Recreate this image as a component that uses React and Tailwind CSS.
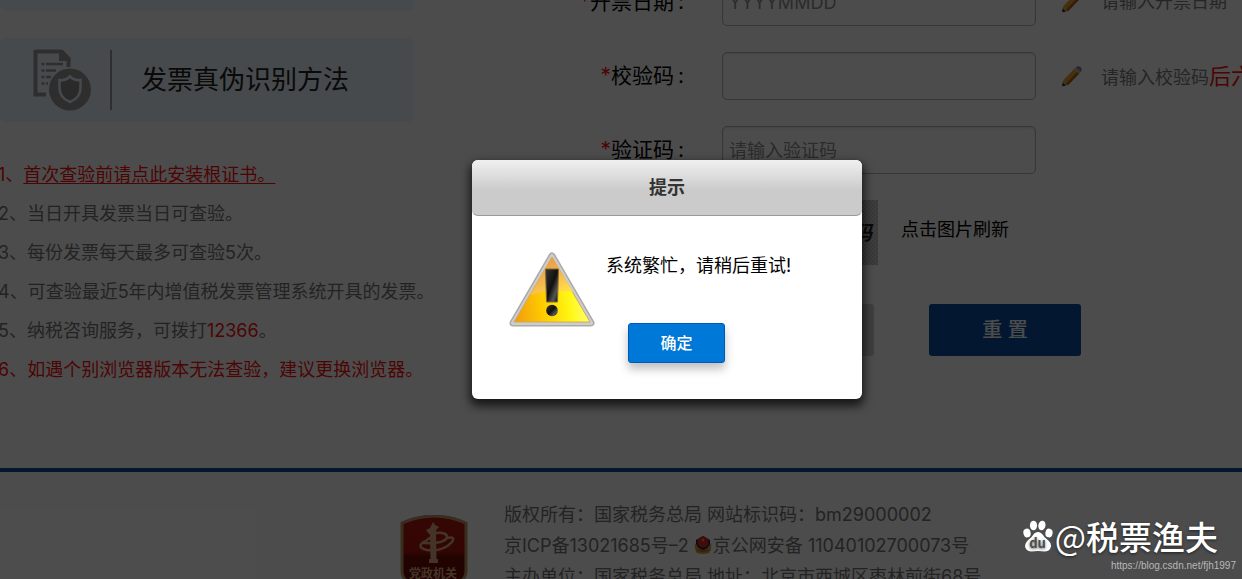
import React from "react";

function Pencil() {
  return (
    <svg viewBox="0 0 22 22" className="h-[22px] w-[22px] shrink-0" aria-hidden="true">
      <path d="M1.5 21 L2 15.5 L7 20 Z" fill="#b8a890" />
      <path d="M1.2 21.3 L1.500 17.500 L5 20.800 Z" fill="#3c3020" />
      <path d="M2 15.5 L13 4 L18 8.800 L7 20.300 Z" fill="#f0a030" />
      <path d="M5 18.500 L16.2 7 L18 8.800 L7 20.300 Z" fill="#a8691c" />
      <path d="M13 4 L14.800 2.200 L19.800 7 L18 8.800 Z" fill="#b9b9b9" />
      <path d="M14.800 2.200 Q17 0.300 19.800 2 Q21.600 4.500 19.800 7 Z" fill="#858585" />
    </svg>
  );
}

function DocumentShield() {
  return (
    <svg viewBox="0 0 60 64" className="h-16 w-[60px] shrink-0" aria-hidden="true">
      <path d="M3.500 3.500 H29 L36.500 11 V19 M3.500 2 V46.500 H14" fill="none" stroke="#999" strokeWidth="4" />
      <path d="M27 2 H31 L38.500 10 V13 H27 Z" fill="#999" />
      <path d="M9.500 16 h3 M14 16 h17 M9.500 22.500 h3 M14 22.500 h10 M9.500 29 h3 M14 29 h5 M9.500 35.500 h3 M14 35.500 h2" stroke="#999" strokeWidth="2.500" />
      <circle cx="38" cy="41.500" r="21" fill="#999" />
      <path d="M38 28.500 C35 31.500 31 32.500 27.500 32 V40 C27.500 46.500 32 51.500 38 54 C44 51.500 48.500 46.500 48.500 40 V32 C45 32.500 41 31.500 38 28.500 Z" fill="#8c8c8c" stroke="#ebf8ff" strokeWidth="2.500" />
    </svg>
  );
}

function Emblem() {
  return (
    <svg viewBox="0 0 68 84" className="h-[84px] w-[68px] shrink-0" aria-hidden="true">
      <defs>
        <linearGradient id="emblem" x1="0" y1="0" x2="0" y2="1">
          <stop offset="0" stopColor="#b41a10" />
          <stop offset="0.44" stopColor="#aa160c" />
          <stop offset="0.5" stopColor="#700c08" />
          <stop offset="1" stopColor="#700c08" />
        </linearGradient>
      </defs>
      <path d="M2 8 Q34 -6 66 8 V56 Q66 63 60 67 L34 82 L8 67 Q2 63 2 56 Z" fill="url(#emblem)" stroke="#c09868" strokeWidth="3" />
      <path d="M30 19 h6 l.5 25 h1.500 v4 h-9 v-4 h1.500 Z" fill="#e0b084" />
      <path d="M33 7 l2 3 4 2 -3 3 1 4 h-8 l-3 -4 4 -2 Z" fill="#e0b084" />
      <path d="M36 18 Q48 17 47 23 Q43 29 25 28 Q27 23 34 22 M47 23 Q56 21 52 27 Q43 37 27 35 Q15 32 25 26" fill="none" stroke="#e0b084" strokeWidth="2.500" />
      <text x="33" y="63" textAnchor="middle" fontSize="12" fontWeight="700" fill="#e0b084">党政机关</text>
    </svg>
  );
}

function PoliceBadge() {
  return (
    <svg viewBox="0 0 18 20" className="mr-px inline-block h-5 w-[18px] align-[-3px]" aria-hidden="true">
      <path d="M1 8 Q0 14 3 18 Q9 20 15 18 Q18 14 17 8 L14 12 H4 Z" fill="#d69a30" />
      <path d="M9 1 L16 5 V9 Q14 14 9 15 Q4 14 2 9 V5 Z" fill="#172a63" />
      <circle cx="9" cy="7" r="5.500" fill="#e02a20" />
      <circle cx="9" cy="5" r="1.200" fill="#f0a030" />
      <path d="M3 15 Q9 18 15 15" fill="none" stroke="#996018" strokeWidth="1" />
    </svg>
  );
}

function Warning() {
  return (
    <svg viewBox="0 0 88 78" className="h-[78px] w-[88px] shrink-0" aria-hidden="true">
      <defs>
        <linearGradient id="amber" x1="0" y1="1" x2="1" y2="0.9">
          <stop offset="0" stopColor="#f09a10" />
          <stop offset="0.4" stopColor="#ffcc00" />
          <stop offset="0.75" stopColor="#fff714" />
          <stop offset="1" stopColor="#ffff70" />
        </linearGradient>
        <linearGradient id="sheen" x1="0" y1="0" x2="0.6" y2="1">
          <stop offset="0" stopColor="#e8963c" />
          <stop offset="0.5" stopColor="#eeac50" />
          <stop offset="1" stopColor="#ffdc48" />
        </linearGradient>
        <linearGradient id="mark" x1="0" y1="0" x2="1" y2="1">
          <stop offset="0" stopColor="#333" />
          <stop offset="0.5" stopColor="#111" />
          <stop offset="0.75" stopColor="#555" />
          <stop offset="1" stopColor="#111" />
        </linearGradient>
      </defs>
      <path d="M44 5 L83 72 H5 Z" fill="#aaa" stroke="#aaa" strokeWidth="7" strokeLinejoin="round" />
      <path d="M44 5 L83 72 H5 Z" fill="#ddd" stroke="#cdcdcd" strokeWidth="4" strokeLinejoin="round" />
      <path d="M44 6 L82 71 H6 Z" fill="url(#amber)" stroke="#d0a860" strokeWidth="1" />
      <path d="M44 6 L65 41 Q42 38 22 44 Z" fill="url(#sheen)" />
      <path d="M37.500 18 H50.500 L49.500 51 H38.500 Z" fill="url(#mark)" stroke="#806830" strokeWidth="1" />
      <circle cx="44" cy="59.500" r="5.800" fill="url(#mark)" />
    </svg>
  );
}

function Paw() {
  return (
    <svg viewBox="0 0 30 32" className="h-8 w-[30px] shrink-0" aria-hidden="true">
      <g fill="#fff">
        <ellipse cx="4" cy="13" rx="3.600" ry="4.400" transform="rotate(-12 4 13)" />
        <ellipse cx="10.500" cy="5.500" rx="3.600" ry="4.800" />
        <ellipse cx="19" cy="5.500" rx="3.600" ry="4.800" transform="rotate(10 19 5)" />
        <ellipse cx="26" cy="13" rx="3.600" ry="4.400" transform="rotate(8 26 13)" />
        <path d="M15 12 C19 12 20 16 23 18.500 C27 21.500 29 24 27.500 28 C25.500 33 20 31 15 31 C10 31 5 33 2.500 28 C1 24 4 21 7.500 18 C10 16 11 12 15 12 Z" />
      </g>
      <text x="14.500" y="28" textAnchor="middle" fontSize="13" fontWeight="700" fill="#4d4d4d">du</text>
    </svg>
  );
}

function Field({ id, label, placeholder, hint }) {
  return (
    <div className="flex h-12 items-center">
      <label htmlFor={id} className="w-[138px] shrink-0 text-right text-[21px] text-black">
        <span className="text-[#ff1010]">*</span>{label}<span className="ml-1">:</span>
      </label>
      <input
        id={id}
        type="text"
        placeholder={placeholder}
        className="ml-[38px] h-12 w-[314px] shrink-0 rounded-[5px] border border-[#b4b4b4] bg-white px-1.5 text-lg text-black shadow-[inset_0_1px_2px_rgba(0,0,0,0.12)] placeholder:text-[#8f8f8f]"
      />
      {hint && (
        <div className="ml-[25px] flex shrink-0 items-center gap-[18px] whitespace-nowrap text-lg text-[#808080]">
          <Pencil />
          <span>{hint}</span>
        </div>
      )}
    </div>
  );
}

export default function App() {
  return (
    <div className="relative h-screen overflow-hidden bg-white font-['Inter','Noto_Sans_CJK_SC',sans-serif]">
      <main className="flex h-[468px]">
        <aside className="w-[414px] shrink-0">
          <div className="h-[11px] rounded-b-md bg-[#ebf8ff]" />
          <h2 className="mt-[27px] flex h-[84px] items-center rounded-md bg-[#ebf8ff] pl-8">
            <DocumentShield />
            <span className="ml-[18px] h-[60px] w-0.5 bg-[#999]" />
            <span className="ml-[29px] text-[26px] leading-[38px] text-[#222]">发票真伪识别方法</span>
          </h2>
          <ol className="-ml-0.5 mt-[33px] whitespace-nowrap text-lg leading-[39px] text-[#777]">
            <li className="text-[#ff1010]">1、<a href="#cert" className="underline underline-offset-2">首次查验前请点此安装根证书。</a></li>
            <li>2、当日开具发票当日可查验。</li>
            <li>3、每份发票每天最多可查验5次。</li>
            <li>4、可查验最近5年内增值税发票管理系统开具的发票。</li>
            <li>5、纳税咨询服务，可拨打<span className="text-[#ff1010]">12366</span>。</li>
            <li className="text-[#ff1010]">6、如遇个别浏览器版本无法查验，建议更换浏览器。</li>
          </ol>
        </aside>
        <form className="-mt-[22px] ml-[132px] flex min-w-0 flex-1 flex-col gap-[26px]" onSubmit={(e) => e.preventDefault()}>
          <Field id="date" label="开票日期" placeholder="YYYYMMDD" hint="请输入开票日期" />
          <Field id="check" label="校验码" hint={<>请输入校验码<span className="text-[22px] text-[#ff1010]">后六位</span></>} />
          <Field id="captcha" label="验证码" placeholder="请输入验证码" />
          <div className="ml-[176px] flex h-[66px] items-start gap-[23px]">
            <button type="button" className="h-[65px] w-[156px] bg-[#c6c6c6] bg-[repeating-conic-gradient(#bbb_0_25%,#d0d0d0_0_50%)] bg-[length:4px_4px] pr-1.5 text-right text-xl font-bold italic text-[#222]">点击获取验证码</button>
            <span className="mt-4 text-lg text-black">点击图片刷新</span>
          </div>
          <div className="ml-[176px] mt-3 flex gap-[55px]">
            <button type="submit" className="h-[52px] w-[152px] rounded-[3px] bg-[#d2d2d2] text-xl text-[#888]">查 验</button>
            <button type="reset" className="h-[52px] w-[152px] rounded-[3px] bg-[#0a53a0] text-xl font-medium text-white">重 置</button>
          </div>
        </form>
      </main>
      <footer className="flex border-t-4 border-[#0a53a0] pl-[400px]">
        <div className="mt-[43px]"><Emblem /></div>
        <div className="ml-9 mt-[27px] shrink-0 whitespace-nowrap text-lg leading-[31px] text-[#777]">
          <p>版权所有：国家税务总局 网站标识码：bm29000002</p>
          <p>京ICP备13021685号–2 <PoliceBadge />京公网安备 11040102700073号</p>
          <p>主办单位：国家税务总局 地址：北京市西城区枣林前街68号</p>
        </div>
      </footer>

      <div className="absolute inset-0 flex items-start justify-center bg-black/70 pl-[92px] pt-40">
        <section role="dialog" aria-labelledby="tip" className="w-[390px] rounded-md bg-white pb-9 shadow-[0_5px_10px_2px_rgba(0,0,0,0.7)]">
          <h1 id="tip" className="flex h-14 items-center justify-center rounded-md border-b border-[#999] bg-[linear-gradient(#f0f0f0,#cbcbcb_55%,#cbcbcb)] text-lg font-bold text-[#333]">提示</h1>
          <div className="flex pl-9 pt-[35px]">
            <Warning />
            <p className="ml-[10px] mt-px text-lg text-black">系统繁忙，请稍后重试!</p>
          </div>
          <button type="button" className="-mt-1.5 ml-[156px] block h-10 w-[97px] rounded-[3px] border border-[#0059b8] bg-[#0078d7] text-base font-medium text-white shadow-[0_6px_10px_rgba(0,0,0,0.25)]">确定</button>
        </section>
      </div>
      <div className="absolute bottom-1 right-1.5 flex flex-col items-end">
        <div className="mr-[18px] flex items-center gap-0.5 whitespace-nowrap font-['Noto_Sans_CJK_SC',sans-serif] text-[33px] leading-[42px] text-white [text-shadow:0_1px_3px_rgba(0,0,0,0.6)]">
          <Paw />
          <span>@<span className="font-medium">税票渔夫</span></span>
        </div>
        <a href="https://blog.csdn.net/fjh1997" className="font-['Liberation_Sans',sans-serif] text-[10px] leading-[18px] text-[#b8b8b8]">https://blog.csdn.net/fjh1997</a>
      </div>
    </div>
  );
}
